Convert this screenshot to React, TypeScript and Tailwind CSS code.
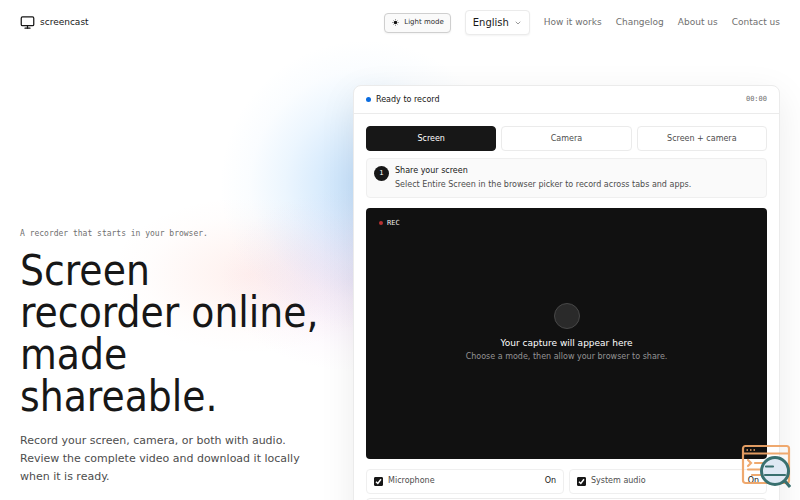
import { useState } from "react";
import { ChevronDown, Monitor } from "lucide-react";
import { clsx } from "clsx";

const NAV_LINKS = ["How it works", "Changelog", "About us", "Contact us"];
const HEADLINE = ["Screen", "recorder online,", "made", "shareable."];
const MODES = ["Screen", "Camera", "Screen + camera"];

function Header() {
  return (
    <header className="relative flex h-[45px] items-center justify-between px-5">
      <a href="#" className="flex items-center gap-[5px] text-[9px] text-[#171717]">
        <Monitor size={15} strokeWidth={2} aria-hidden />
        screencast
      </a>
      <nav className="flex items-center gap-[14px] text-[9px] text-[#707070]">
        <button
          type="button"
          className="flex h-5 items-center gap-1 rounded border border-[#cfcfcf] bg-[#fafafa] px-[6px] text-[7px] text-[#303030] shadow-xs"
        >
          <SunIcon />
          Light mode
        </button>
        <div className="relative">
          <select
            aria-label="Language"
            className="block h-[25px] w-[65px] appearance-none rounded border border-[#ebebeb] bg-white pl-[7px] text-[10px] text-[#171717] shadow-xs"
          >
            <option>English</option>
          </select>
          <ChevronDown
            size={8}
            strokeWidth={2}
            className="pointer-events-none absolute top-[9px] right-2 text-[#666]"
            aria-hidden
          />
        </div>
        {NAV_LINKS.map((label) => (
          <a key={label} href="#" className="whitespace-nowrap">
            {label}
          </a>
        ))}
      </nav>
    </header>
  );
}

function SunIcon() {
  return (
    <svg width="9" height="9" viewBox="0 0 18 18" stroke="#444" strokeWidth="1" aria-hidden>
      <circle cx="9" cy="9" r="3.6" fill="#111" stroke="none" />
      <path d="M9 2v2M9 14v2M2 9h2M14 9h2M4 4l1.400 1.400M12.600 12.600l1.400 1.400M4 14l1.400-1.400M12.600 5.400l1.400-1.400" />
    </svg>
  );
}

function Toggle({ id, label }: { id: string; label: string }) {
  const [on, setOn] = useState(true);
  return (
    <div className="flex h-[25px] items-center rounded border border-[#efefef] px-[7px] text-[8px] text-[#4d4d4d]">
      <span className="relative mr-[5px] size-[9px]">
        <input
          id={id}
          type="checkbox"
          checked={on}
          onChange={(e) => setOn(e.target.checked)}
          className="block size-[9px] appearance-none rounded-[1px] border border-[#171717] checked:bg-[#171717]"
        />
        {on && (
          <svg viewBox="0 0 9 9" className="pointer-events-none absolute inset-0" aria-hidden>
            <path d="M2 4.8 3.8 6.5 7 2.3" fill="none" stroke="white" strokeWidth="1.5" />
          </svg>
        )}
      </span>
      <label htmlFor={id}>{label}</label>
      <span className="ml-auto text-[#171717]">{on ? "On" : "Off"}</span>
    </div>
  );
}

function Recorder() {
  const [mode, setMode] = useState("Screen");
  return (
    <section className="rounded-lg border border-[#ebebeb] bg-white shadow-[0_10px_36px_rgba(0,0,0,0.08)]">
      <div className="flex h-7 items-center border-b border-[#ebebeb] px-3">
        <span className="mr-[5px] size-[5px] rounded-full bg-[#0a6ce0]" />
        <span className="text-[8px] text-[#171717]">Ready to record</span>
        <span className="ml-auto font-['DejaVu_Sans_Mono',monospace] text-[7px] text-[#707070]">00:00</span>
      </div>
      <div className="p-3">
        <div className="grid grid-cols-3 gap-[5px]">
          {MODES.map((m) => (
            <button
              key={m}
              type="button"
              aria-pressed={mode === m}
              onClick={() => setMode(m)}
              className={clsx(
                "h-[25px] rounded border text-[8px]",
                mode === m ? "border-[#171717] bg-[#171717] text-white" : "border-[#ebebeb] bg-white text-[#4d4d4d]"
              )}
            >
              {m}
            </button>
          ))}
        </div>

        <div className="mt-[7px] flex gap-[6px] rounded border border-[#efefef] bg-[#fafafa] px-[7px] py-[5px]">
          <span className="mt-[2px] flex size-[15px] shrink-0 items-center justify-center rounded-full bg-[#171717] text-[7px] text-white">
            1
          </span>
          <div className="text-[8px] leading-[14px]">
            <p className="text-[#171717]">Share your screen</p>
            <p className="text-[#4d4d4d]">Select Entire Screen in the browser picker to record across tabs and apps.</p>
          </div>
        </div>

        <div className="relative mt-[10px] flex aspect-[8/5] flex-col items-center justify-center rounded bg-[#111]">
          <span className="absolute top-[10px] left-[13px] flex items-center gap-1 font-['DejaVu_Sans_Mono',monospace] text-[7px] text-[#eee]">
            <span className="size-1 rounded-full bg-[#b83232]" />
            REC
          </span>
          <span className="size-[26px] rounded-full border border-[#484848] bg-[#2a2a2a]" />
          <p className="mt-[7px] text-[9px] leading-[14px] text-white">Your capture will appear here</p>
          <p className="text-[8px] leading-[14px] text-[#949494]">Choose a mode, then allow your browser to share.</p>
        </div>

        <div className="mt-[10px] grid grid-cols-2 gap-[5px]">
          <Toggle id="microphone" label="Microphone" />
          <Toggle id="system-audio" label="System audio" />
        </div>
        <div className="mt-1 h-8 rounded border border-[#ebebeb]" />
      </div>
    </section>
  );
}

/** Floating badge: a browser window under a magnifying glass. */
function InspectBadge() {
  return (
    <svg viewBox="0 0 50 44" fill="none" className="fixed right-[9px] bottom-3 h-11 w-[50px]" aria-hidden>
      <g stroke="#efa568" strokeWidth="2.2" opacity="0.95">
        <rect x="2" y="2" width="46" height="37" rx="2.5" />
        <path d="M2 9.500h46" />
        <path d="M7 16l3 3-3 3M14 19h10M7 25.500h12M11 31h9" strokeLinecap="round" />
      </g>
      <path d="M5.500 6h1.500M9 6h1.500M12.500 6h1.500" stroke="#efa568" strokeWidth="1.500" />
      <circle cx="34" cy="27" r="13.500" fill="#dfe9f4" stroke="#39706f" strokeWidth="3" />
      <path d="M43 36l6 7" stroke="#39706f" strokeWidth="3" />
      <path d="M25 22.500h7M24 31h20" stroke="#39706f" strokeWidth="2.200" strokeLinecap="round" />
    </svg>
  );
}

export default function App() {
  return (
    <div className="relative min-h-screen overflow-hidden bg-white font-['DejaVu_Sans',sans-serif] text-[#171717]">
      <div
        aria-hidden
        className="absolute inset-0 bg-[radial-gradient(circle_at_365px_185px,rgba(90,170,245,0.36)_0,rgba(100,175,245,0.28)_35px,rgba(120,190,250,0.14)_80px,rgba(130,195,250,0.04)_115px,transparent_145px),radial-gradient(ellipse_at_355px_280px,rgba(200,140,220,0.17)_0,rgba(210,150,225,0.12)_50px,rgba(215,160,225,0.04)_100px,transparent_135px),radial-gradient(ellipse_at_250px_275px,rgba(250,130,110,0.12)_0,rgba(250,140,120,0.08)_50px,rgba(250,150,130,0.02)_105px,transparent_140px)]"
      />
      <Header />
      <main className="relative grid grid-cols-[minmax(0,313fr)_minmax(0,427fr)] gap-5 px-5 pt-10 pb-10">
        <div className="pt-36">
          <p className="font-['DejaVu_Sans_Mono',monospace] text-[8px] leading-[10px] text-[#707070]">
            A recorder that starts in your browser.
          </p>
          <h1 className="mt-[11px] font-['DejaVu_Sans_Condensed','DejaVu_Sans',sans-serif] text-[42px] leading-[42px] whitespace-nowrap">
            {HEADLINE.map((line) => (
              <span key={line} className="block">
                {line}
              </span>
            ))}
          </h1>
          <p className="mt-[14px] max-w-[290px] text-[11px] leading-[18px] text-[#4d4d4d]">
            Record your screen, camera, or both with audio. Review the complete video and download it locally when it
            is ready.
          </p>
        </div>
        <Recorder />
      </main>
      <InspectBadge />
    </div>
  );
}
